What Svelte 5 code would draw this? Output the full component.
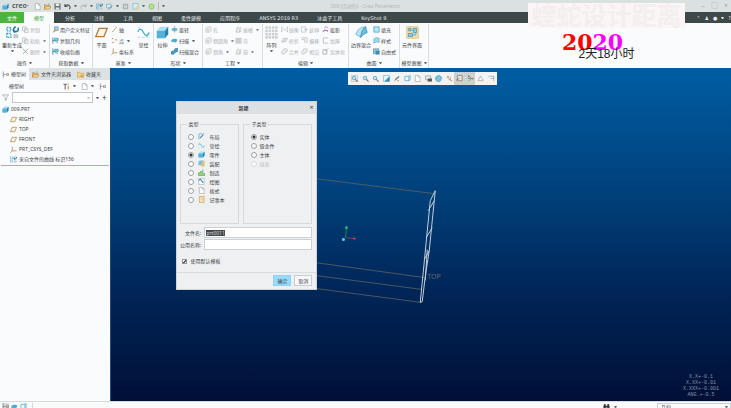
<script>
    import { onMount } from "svelte";

    let fileName = $state("prt0011");
    let commonName = $state("");
    let filter = $state("");
    let kind = $state("零件");
    let subKind = $state("实体");
    let useTemplate = $state(true);
    let nameInput;

    const tabs = ["分析", "注释", "工具", "视图", "柔性建模", "应用程序", "ANSYS 2019 R3", "冰盒子工具", "KeyShot 9"];

    const quick = [
        { icon: "file" },
        { icon: "folder" },
        { icon: "save" },
        { icon: "undo", menu: true },
        { icon: "redo", menu: true },
        { icon: "regen" },
        { icon: "window", menu: true },
        { icon: "stop" },
        { icon: "layers", menu: true },
        { icon: "ball" },
    ];

    // each part is either one large button or a column of small ones
    const groups = [
        {
            label: "操作",
            parts: [
                { big: "重新生成", icon: "regen", menu: true },
                [
                    { text: "复制", icon: "copy", off: true },
                    { text: "粘贴", icon: "copy", off: true, menu: true },
                    { text: "删除", icon: "cross", off: true, menu: true },
                ],
            ],
        },
        {
            label: "获取数据",
            parts: [
                [
                    { text: "用户定义特征", icon: "feature" },
                    { text: "复制几何", icon: "geom" },
                    { text: "收缩包络", icon: "geom" },
                ],
            ],
        },
        {
            label: "基准",
            parts: [
                { big: "平面", icon: "plane" },
                [
                    { text: "轴", icon: "axis" },
                    { text: "点", icon: "points", menu: true },
                    { text: "坐标系", icon: "csys" },
                ],
                { big: "草绘", icon: "sketch" },
            ],
        },
        {
            label: "形状",
            parts: [
                { big: "拉伸", icon: "cube" },
                [
                    { text: "旋转", icon: "revolve" },
                    { text: "扫描", icon: "sweep", menu: true },
                    { text: "扫描混合", icon: "blend" },
                ],
            ],
        },
        {
            label: "工程",
            parts: [
                [
                    { text: "孔", icon: "hole", off: true },
                    { text: "倒圆角", icon: "hole", off: true, menu: true },
                    { text: "倒角", icon: "hole", off: true, menu: true },
                ],
                [
                    { text: "拔模", icon: "draft", off: true, menu: true },
                    { text: "壳", icon: "shell", off: true },
                    { text: "筋", icon: "draft", off: true, menu: true },
                ],
            ],
        },
        {
            label: "编辑",
            parts: [
                { big: "阵列", icon: "pattern", menu: true },
                [
                    { text: "镜像", icon: "mirror", off: true },
                    { text: "修剪", icon: "trim", off: true },
                    { text: "合并", icon: "merge", off: true },
                ],
                [
                    { text: "延伸", icon: "extend", off: true },
                    { text: "偏移", icon: "offset", off: true },
                    { text: "相交", icon: "merge", off: true },
                ],
                [
                    { text: "投影", icon: "project" },
                    { text: "加厚", icon: "thick", off: true },
                    { text: "实体化", icon: "solid", off: true },
                ],
            ],
        },
        {
            label: "曲面",
            parts: [
                { big: "边界混合", icon: "surface" },
                [
                    { text: "填充", icon: "fill" },
                    { text: "样式", icon: "style" },
                    { text: "自由式", icon: "free" },
                ],
            ],
        },
        {
            label: "模型意图",
            parts: [{ big: "元件界面", icon: "component" }],
        },
    ];

    const tree = [
        { text: "RIGHT", icon: "plane" },
        { text: "TOP", icon: "plane" },
        { text: "FRONT", icon: "plane" },
        { text: "PRT_CSYS_DEF", icon: "csys" },
        { text: "来自文件的曲线 标识156", icon: "regen" },
    ];

    const viewTools = ["zoomfit", "zoom", "zoom", "repaint", "pen", "box", "file", "camera", "ball3d", "axes", "note", "spin", "cone", "flag"];

    const kinds = [
        { name: "布局", icon: "layout" },
        { name: "草绘", icon: "sketch" },
        { name: "零件", icon: "cube" },
        { name: "装配", icon: "assembly" },
        { name: "制造", icon: "mfg" },
        { name: "绘图", icon: "drawing" },
        { name: "格式", icon: "file" },
        { name: "记事本", icon: "notebook" },
    ];

    const subKinds = [
        { name: "实体" },
        { name: "钣金件" },
        { name: "主体" },
        { name: "线束", off: true },
    ];

    onMount(() => {
        nameInput.focus();
        nameInput.select();
    });
</script>

{#snippet icon(name)}
    <svg class="icon" viewBox="0 0 16 16" fill="none" stroke-width="1.6" aria-hidden="true">
        {#if name === "file"}
            <path d="M3 1h7l4 4v10H3z" fill="#fff" stroke="#a4a9aa" />
            <path d="M10 1v4h4" stroke="#a4a9aa" />
        {:else if name === "folder"}
            <path d="M1 14V4h5l2 2h5v3" fill="#e8bd75" stroke="#b98c48" />
            <path d="M1 14l3-6h12l-3 6z" fill="#f7d898" stroke="#b98c48" />
            <path d="M9 3q3-3 5 1" stroke="#59a9c8" />
        {:else if name === "save"}
            <path d="M1 1h14v14H1z" fill="#6c7274" />
            <path d="M4 1h8v6H4zM4 10h8v5H4z" fill="#e9eced" />
        {:else if name === "undo"}
            <path d="M2 2v6h6M2 8q5-6 10-2q4 4 0 8" stroke="#4d5456" stroke-width="2.4" />
        {:else if name === "redo"}
            <path d="M14 2v6H8M14 8q-5-6-10-2q-4 4 0 8" stroke="#a9afb0" stroke-width="2" />
        {:else if name === "regen"}
            <path d="M1 2h5v4H1zM1 9h5v5H1z" stroke="#39a2c7" stroke-dasharray="2 1" />
            <path d="M9 10h6v5H9z" fill="#c3c8ca" />
            <path d="M12 1q-4 2-2 6M11 7q5 0 4-5" stroke="#2879a2" stroke-width="2" />
            <path d="M8 5l2 4 3-3z" fill="#2879a2" />
        {:else if name === "window"}
            <path d="M1 3h11v8H1z" fill="#d7edf5" stroke="#72a9bd" />
            <path d="M5 15l9-9" stroke="#5a8292" stroke-width="2" />
        {:else if name === "stop"}
            <path d="M3 3h10v10H3z" stroke="#899092" />
            <path d="M5 6h6M5 10h6" stroke="#b2b7b8" />
        {:else if name === "layers"}
            <path d="M2 1h12v13H2z" fill="#d5eff8" stroke="#79b4c9" />
            <path d="M8 8h7v7H8z" fill="#f1d386" />
        {:else if name === "ball"}
            <circle cx="8" cy="8" r="6" fill="#b8df8e" stroke="#88ba61" />
        {:else if name === "copy"}
            <path d="M1 2h8v9H1zM6 6h8v9H6z" fill="#f4f5f5" stroke="#b4b8ba" />
        {:else if name === "cross"}
            <path d="M2 2l12 12M14 2L2 14" stroke="#8e9496" />
        {:else if name === "feature"}
            <path d="M6 2h8v8H6z" fill="#a8d8ec" stroke="#4596b8" />
            <path d="M1 14l7-8 3 3-7 6z" fill="#e59a45" />
        {:else if name === "geom"}
            <path d="M2 1v14M2 8h5" stroke="#2d86ae" stroke-width="2" />
            <path d="M6 3h8v6H6zM7 9l7 5" fill="#8acbe4" stroke="#3c93b9" />
        {:else if name === "plane"}
            <path d="M5 3h10l-4 10H1z" fill="#faf4e6" stroke="#ae7f3e" />
        {:else if name === "axis"}
            <path d="M3 14L13 2" stroke="#957148" stroke-dasharray="5 1" />
        {:else if name === "points"}
            <path d="M2 2l3 3M5 2L2 5M10 5l3 3M13 5l-3 3M3 11l3 3M6 11l-3 3" stroke="#ac8045" />
        {:else if name === "csys"}
            <path d="M5 1v10h10M5 11l-4 4" stroke="#a8773c" />
        {:else if name === "sketch"}
            <path d="M1 7q3-7 7 1t7 0" stroke="#42a9cc" />
            <path d="M1 14h3M6 14h3M11 14h3M1 2h2" stroke="#a6cfdc" stroke-width="1" />
        {:else if name === "cube"}
            <path d="M1 6l4-5h10v9l-4 5H1z" fill="#a9dff2" />
            <path d="M1 6h10v9H1z" fill="#55b2d5" />
            <path d="M11 6l4-5v9l-4 5z" fill="#2a82ae" />
        {:else if name === "revolve"}
            <ellipse cx="8" cy="8" rx="7" ry="4" fill="#6dbad7" />
            <path d="M8 1v14" stroke="#8a8f91" />
        {:else if name === "sweep"}
            <path d="M1 7q6-6 14-1l-4 7q-4-4-10-1z" fill="#4ca7cd" />
        {:else if name === "blend"}
            <path d="M1 14V8l5-1 4-6h5v7l-6 2-3 4z" fill="#4a9fc5" stroke="#2c7299" />
        {:else if name === "hole"}
            <path d="M2 14V5l4-3h8v9l-4 3z" fill="#eef0f0" stroke="#bec2c3" />
            <circle cx="7" cy="9" r="2" stroke="#bec2c3" />
        {:else if name === "draft"}
            <path d="M2 14L5 3h4l2 11zM13 2v12" fill="#eceeee" stroke="#b8bcbe" />
        {:else if name === "shell"}
            <path d="M2 3h12v11H2zM5 6h6v5H5z" fill="#dfe1e2" stroke="#b8bcbe" />
        {:else if name === "pattern"}
            {#each [1, 5, 9, 13] as x}
                {#each [1, 5, 9, 13] as y}
                    <rect {x} {y} width="2" height="2" fill="#b2b6b8" stroke="#cfd2d3" stroke-width="1" />
                {/each}
            {/each}
        {:else if name === "mirror"}
            <path d="M1 2l6 6-6 6zM15 2L9 8l6 6z" stroke="#bcc0c2" />
        {:else if name === "trim"}
            <path d="M1 10l5-7h9l-4 7zM4 14l8-12" fill="#eceeee" stroke="#b9bdbf" />
        {:else if name === "merge"}
            <path d="M1 10q0-4 5-4V2h8v7h-4q0 5-5 5-4 0-4-4z" fill="#f0f1f1" stroke="#b9bdbf" />
        {:else if name === "extend"}
            <path d="M1 2h9v12H1zM7 8h8M12 5l3 3-3 3" stroke="#b9bdbf" />
        {:else if name === "offset"}
            <path d="M1 2h13M1 6h8v8M14 2v12" stroke="#b0b4b6" />
        {:else if name === "project"}
            <path d="M2 13q4-6 12-1" stroke="#8a63a8" stroke-width="2.4" />
            <path d="M8 1l6 4M5 6l4-5" stroke="#b57ab5" />
        {:else if name === "thick"}
            <path d="M14 2H3v12h11" stroke="#b9bdbf" stroke-width="2" />
        {:else if name === "solid"}
            <path d="M2 4h9v10H2zM7 8l7-7" stroke="#979c9e" />
        {:else if name === "surface"}
            <path d="M1 10Q4 1 13 1q-5 4-6 13z" fill="#bce5f4" stroke="#6ab0cb" stroke-width="1" />
            <path d="M7 14Q8 4 13 1l2 7q-4 1-8 6z" fill="#6dbddb" stroke="#3b95b8" stroke-width="1" />
        {:else if name === "fill"}
            <path d="M2 2h12v12H2z" fill="#bce8f6" stroke="#2f9abf" />
        {:else if name === "style"}
            <path d="M2 14V5q5-6 12-2v9q-6-3-12 2z" fill="#a6dbef" stroke="#56a5c2" />
        {:else if name === "free"}
            <path d="M1 2h12v11H1z" fill="#92d1e8" stroke="#5d7f8c" />
            <path d="M5 6h10v9H7z" fill="#3c8caf" />
        {:else if name === "component"}
            <path d="M1 1h14v14H1z" fill="#f8deb0" stroke="#e0b775" stroke-width="1" />
            <path d="M3 9h5v4H3zM9 3h4v5H9zM3 3h3v3H3z" fill="#8ccbe1" stroke="#4b9cb9" stroke-width="1" />
            <path d="M6 5h3M8 11h4V8" stroke="#4b9cb9" stroke-width="1" />
        {:else if name === "tree"}
            <path d="M3 1v14M3 8h5M10 6h5v4h-5z" stroke="#767c7e" />
        {:else if name === "star"}
            <path d="M1 3h5l2 2h7v9H1z" fill="#f2d38c" stroke="#cda557" />
            <path d="M11 7l1 3h3l-2 2 1 3-3-2-3 2 1-3-2-2h3z" fill="#e59028" />
        {:else if name === "tools"}
            <path d="M1 3h8M5 3v12" stroke="#63696b" stroke-width="2.4" />
            <path d="M12 6v9M12 1v3" stroke="#cf8b36" stroke-width="2.4" />
        {:else if name === "funnel"}
            <path d="M1 2h14L10 8v6H7V8z" stroke="#9aa0a2" />
        {:else if name === "zoom" || name === "zoomfit"}
            {#if name === "zoomfit"}
                <path d="M1 1h14v14H1z" stroke="#b6bcc0" />
            {/if}
            <circle cx="7" cy="7" r="4" fill="#c3e5f1" stroke="#4694b4" />
            <path d="M10 10l5 5" stroke="#6b7478" stroke-width="2.4" />
        {:else if name === "repaint"}
            <path d="M1 1h14v14H1z" fill="#e4f4fa" stroke="#84b3c4" />
            <path d="M15 3v12H3z" fill="#2f8db5" />
        {:else if name === "pen"}
            <path d="M2 14l4-6 7-6 2 2-7 6z" fill="#6f7678" />
            <path d="M9 13h5" stroke="#868c8e" />
        {:else if name === "box"}
            <path d="M2 3h9v10H2zM11 3l3-2v10l-3 2" fill="#eef9fd" stroke="#49a0c1" />
        {:else if name === "camera"}
            <path d="M1 2h12v9H1z" fill="#e8ebec" stroke="#94999b" />
            <path d="M6 8h10v7H6z" fill="#555b5e" />
        {:else if name === "ball3d"}
            <path d="M1 6q7-9 14-1l-2 8q-8 5-11-2z" fill="#7fc5df" stroke="#4393b2" />
        {:else if name === "axes"}
            <path d="M2 2l5 5M7 2L2 7M5 9l10 5M10 4v8" stroke="#b48849" />
        {:else if name === "note"}
            <path d="M3 1h11v12H3z" fill="#efe6c7" stroke="#73797b" />
            <path d="M1 12l7-5" stroke="#555b5e" />
        {:else if name === "spin"}
            <path d="M2 8h12M4 2l6 6-6 6" stroke="#3a9c68" />
            <circle cx="13" cy="8" r="2" fill="#d26454" />
            <circle cx="4" cy="3" r="2" fill="#cf5146" />
        {:else if name === "cone"}
            <path d="M8 2l6 11H2z" stroke="#9fa5a8" />
        {:else if name === "flag"}
            <path d="M1 3h12v5H6M13 3v11" stroke="#9fa5a8" />
        {:else if name === "layout"}
            <path d="M2 14V2h12" stroke="#3591b7" stroke-dasharray="4 1" />
            <path d="M4 12l8-8" stroke="#2a779b" stroke-width="2.4" />
        {:else if name === "assembly"}
            <path d="M1 4l3-3h7v8l-3 3H1z" fill="#79c0da" />
            <path d="M7 8h8v7H7zM12 1h3v7h-3z" fill="#e8bd69" />
        {:else if name === "mfg"}
            <path d="M1 15V9h4V6h5v4h5v5z" fill="#9cd28d" stroke="#5da54f" />
            <path d="M11 1v5" stroke="#5d9ab0" stroke-width="2" />
        {:else if name === "drawing"}
            <path d="M2 1h12v14H2z" fill="#fff" stroke="#abb1b3" />
            <path d="M1 5l5-2 6 8" stroke="#3191b7" stroke-width="2.4" />
        {:else if name === "notebook"}
            <path d="M3 1h11v14H3z" fill="#f8e8c4" stroke="#c99c58" />
            <path d="M6 5h6M6 9h6" stroke="#d8b47c" />
        {:else if name === "find"}
            <path d="M1 7l2-5h3v12H1zM15 7l-2-5h-3v12h5zM6 6h4v4H6z" fill="#35393b" />
        {/if}
    </svg>
{/snippet}

<div class="app">
    <header class="titlebar">
        <div class="left">
            <span class="logo">{@render icon("cube")}creo<sup>•</sup></span>
            <div class="quick">
                {#each quick as q}
                    <button aria-label={q.icon}>
                        {@render icon(q.icon)}
                        {#if q.menu}<i class="arrow"></i>{/if}
                    </button>
                {/each}
                <button class="more" aria-label="自定义"><i class="arrow"></i></button>
            </div>
        </div>
        <h1>009 (活动的) - Creo Parametric</h1>
        <div class="window-buttons">
            <button aria-label="最小化">–</button>
            <button aria-label="最大化">□</button>
            <button aria-label="关闭">×</button>
        </div>
    </header>

    <nav class="tabs">
        <button class="file-tab">文件</button>
        <button class="active">模型</button>
        <div class="rest">
            {#each tabs as tab}
                <button>{tab}</button>
            {/each}
        </div>
        <div class="help">
            <button aria-label="折叠">⌃</button>
            <button aria-label="搜索">♟</button>
            <button aria-label="选项">●</button>
            <i class="arrow"></i>
            <button aria-label="帮助">?</button>
        </div>
    </nav>

    <section class="ribbon">
        {#each groups as group}
            <div class="group">
                <div class="parts">
                    {#each group.parts as part}
                        {#if part.big}
                            <button class="big">
                                {@render icon(part.icon)}
                                <span>{part.big}</span>
                                {#if part.menu}<i class="arrow"></i>{/if}
                            </button>
                        {:else}
                            <div class="column">
                                {#each part as item}
                                    <button class="small" disabled={item.off}>
                                        {@render icon(item.icon)}
                                        <span>{item.text}</span>
                                        {#if item.menu}<i class="arrow"></i>{/if}
                                    </button>
                                {/each}
                            </div>
                        {/if}
                    {/each}
                </div>
                <button class="group-label">{group.label}<i class="arrow"></i></button>
            </div>
        {/each}
    </section>

    <main>
        <aside>
            <div class="side-tabs">
                <button class="active">{@render icon("tree")}模型树</button>
                <button>{@render icon("folder")}文件夹浏览器</button>
                <button>{@render icon("star")}收藏夹</button>
            </div>
            <div class="side-head">
                <h2>模型树</h2>
                <button aria-label="设置">{@render icon("tools")}<i class="arrow"></i></button>
                <button aria-label="显示">{@render icon("file")}<i class="arrow"></i></button>
                <button aria-label="层">{@render icon("tree")}</button>
            </div>
            <div class="filter">
                {@render icon("funnel")}
                <div class="filter-box">
                    <input type="text" aria-label="过滤" bind:value={filter} />
                    <button aria-label="清除" onclick={() => (filter = "")}>×</button>
                </div>
                <i class="arrow"></i>
                <button aria-label="添加">+</button>
            </div>
            <ul>
                <li class="root">{@render icon("cube")}009.PRT</li>
                {#each tree as node}
                    <li>{@render icon(node.icon)}{node.text}</li>
                {/each}
            </ul>
        </aside>

        <section class="canvas">
            <svg class="scene" viewBox="110 68 621 333" preserveAspectRatio="xMinYMin meet">
                <g stroke="#5f6260" stroke-width="0.8">
                    <path d="M300 177L434 194M300 261L424 278M300 274L422 290M300 287L421 303" />
                </g>
                <g stroke="#c4ced8" stroke-width="1" fill="none">
                    <path d="M435 191L430 201L420 303L422 302L425 277L429 251L435 191" />
                    <path d="M434 201L428 211M432 228L426 238M429 251L424 260M427 250L425 281" />
                </g>
                <path d="M345 238L346 229" stroke="#249551" stroke-width="0.8" />
                <path d="M345 238L354 239" stroke="#954255" stroke-width="0.8" />
                <circle cx="346" cy="228" r="1.4" fill="#2fc65a" />
                <circle cx="354" cy="239" r="1.2" fill="#b74a55" />
                <circle cx="343" cy="240" r="1.5" fill="#45d3e2" />
                <text x="427" y="279" class="datum">TOP</text>
            </svg>

            <div class="view-tools">
                {#each viewTools as tool, i}
                    <button class:pressed={i === 10 || i === 11} aria-label={tool}>{@render icon(tool)}</button>
                {/each}
            </div>

            <pre class="tolerance">X.X+-0.1
X.XX+-0.01
X.XXX+-0.001
ANG.+-0.5</pre>

            <form class="dialog" onsubmit={(e) => e.preventDefault()}>
                <div class="dialog-title">
                    <h2>新建</h2>
                    <button type="button" aria-label="关闭">×</button>
                </div>
                <div class="choices">
                    <fieldset>
                        <legend>类型</legend>
                        {#each kinds as k}
                            <label>
                                <input type="radio" name="kind" value={k.name} bind:group={kind} />
                                {@render icon(k.icon)}
                                {k.name}
                            </label>
                        {/each}
                    </fieldset>
                    <fieldset class="sub">
                        <legend>子类型</legend>
                        {#each subKinds as k}
                            <label class:off={k.off}>
                                <input type="radio" name="sub" value={k.name} disabled={k.off} bind:group={subKind} />
                                {k.name}
                            </label>
                        {/each}
                    </fieldset>
                </div>
                <div class="fields">
                    <label for="file-name">文件名:</label>
                    <input id="file-name" type="text" bind:value={fileName} bind:this={nameInput} />
                    <label for="common-name">公用名称:</label>
                    <input id="common-name" type="text" bind:value={commonName} />
                </div>
                <label class="template">
                    <input type="checkbox" bind:checked={useTemplate} />
                    使用默认模板
                </label>
                <div class="dialog-buttons">
                    <button class="ok">确定</button>
                    <button type="button">取消</button>
                </div>
            </form>
        </section>
    </main>

    <footer>
        <button class="pressed" aria-label="模型树">{@render icon("tree")}</button>
        <button aria-label="浏览器">{@render icon("sweep")}</button>
        <button aria-label="全屏">{@render icon("box")}</button>
        <span class="divider"></span>
        <button class="find" aria-label="查找">{@render icon("find")}<i class="arrow"></i></button>
        <select aria-label="选择过滤器">
            <option>几何</option>
        </select>
        <i class="arrow"></i>
    </footer>

    <div class="overlay">
        <p class="banner">蝰蛇设计距离</p>
        <p class="year">20<span>20</span></p>
        <p class="countdown">2天18小时</p>
    </div>
</div>

<style>
    :global(body) {
        background: #fafcfd;
    }

    .app {
        position: relative;
        display: flex;
        flex-direction: column;
        height: 100vh;
        overflow: hidden;
        font-family: "Noto Sans", "Noto Sans CJK SC", sans-serif;
        font-size: 5px;
        line-height: 6px;
        color: #3c4244;
    }

    h1,
    h2,
    p,
    pre,
    ul {
        margin: 0;
        padding: 0;
        font-size: 5px;
        font-weight: normal;
    }

    button,
    input,
    select {
        font: inherit;
        color: inherit;
        margin: 0;
        padding: 0;
        border: 0;
        background: none;
        box-sizing: border-box;
    }

    button {
        display: flex;
        align-items: center;
        white-space: nowrap;
    }

    .icon {
        width: 7px;
        height: 7px;
        flex: none;
    }

    .arrow {
        flex: none;
        border: 1px solid transparent;
        border-top: 2px solid #666c6e;
        border-bottom: 0;
        width: 1px;
    }

    .titlebar {
        flex: 0 0 12px;
        display: grid;
        grid-template-columns: 1fr auto 1fr;
        align-items: center;
        background: #dae1e0;
    }

    .left {
        display: flex;
        align-items: center;
    }

    .logo {
        display: flex;
        align-items: center;
        gap: 3px;
        width: 34px;
        padding-left: 2px;
        box-sizing: border-box;
        font-size: 7px;
        font-weight: 600;
        color: #4c5254;
    }

    .logo sup {
        font-size: 4px;
        margin-left: -3px;
    }

    .quick {
        display: flex;
        align-items: center;
        gap: 3px;
    }

    .quick button {
        gap: 3px;
    }

    .quick .more {
        border-left: 1px solid #b4bab9;
        padding-left: 3px;
        height: 8px;
    }

    .titlebar h1 {
        color: #b0b8b7;
    }

    .window-buttons {
        display: flex;
        justify-content: flex-end;
        gap: 6px;
        padding-right: 3px;
        font-size: 7px;
        color: #a0a7a6;
    }

    .tabs {
        flex: 0 0 11px;
        display: flex;
        background: #3d484b;
        color: #e5e9ea;
        font-family: "DejaVu Sans", "Noto Sans CJK SC", sans-serif;
    }

    .tabs > button {
        justify-content: center;
        padding: 0 10px;
    }

    .tabs .file-tab {
        background: #4db53f;
        padding: 0 7px;
        color: #fff;
    }

    .tabs .active {
        background: #f8fbfc;
        color: #459b39;
    }

    .rest {
        display: flex;
        gap: 19px;
        padding-left: 11px;
    }

    .help {
        display: flex;
        align-items: center;
        gap: 4px;
        margin-left: auto;
    }

    .help .arrow {
        border-top-color: #e5e9ea;
    }

    .ribbon {
        flex: 0 0 45px;
        display: grid;
        grid-template-columns: 50px 43px 61px 49px 60px 86px 51px 29px;
        background: #f9fbfd;
    }

    .group {
        display: flex;
        flex-direction: column;
        min-width: 0;
        border-right: 1px solid #d9dee0;
        margin-top: 1px;
    }

    .parts {
        flex: 1;
        display: flex;
        justify-content: space-between;
        padding: 0 3px 0 2px;
    }

    .column {
        display: flex;
        flex-direction: column;
    }

    .small {
        height: 11px;
        gap: 1px;
    }

    .small .arrow {
        margin-left: 2px;
    }

    .small:disabled {
        color: #adb2b4;
    }

    .small:disabled .arrow {
        border-top-color: #8e9496;
    }

    .big {
        flex-direction: column;
        padding-top: 2px;
    }

    .big .icon {
        width: 13px;
        height: 13px;
        margin-bottom: 3px;
    }

    .big .arrow {
        margin-top: 2px;
    }

    .group-label {
        height: 11px;
        justify-content: center;
        gap: 2px;
    }

    main {
        flex: 1;
        display: flex;
        min-height: 0;
    }

    aside {
        flex: 0 0 110px;
        background: #f9fbfd;
    }

    .side-tabs {
        display: flex;
        height: 12px;
        background: #dce1e3;
    }

    .side-tabs button {
        gap: 2px;
        padding: 0 3px;
    }

    .side-tabs .active {
        background: #f9fbfd;
        padding: 0 3px 0 2px;
    }

    .side-head {
        display: flex;
        align-items: center;
        gap: 5px;
        height: 12px;
        padding: 0 4px 0 9px;
    }

    .side-head h2 {
        flex: 1;
    }

    .side-head button {
        gap: 3px;
    }

    .filter {
        display: flex;
        align-items: center;
        gap: 3px;
        padding: 0 4px 0 2px;
    }

    .filter-box {
        flex: 1;
        display: flex;
        height: 11px;
        box-sizing: border-box;
        border: 1px solid #c0c6c9;
        background: #fff;
    }

    .filter-box input {
        flex: 1;
        min-width: 0;
    }

    .filter-box button {
        padding-right: 2px;
        color: #8b9193;
    }

    .filter > button {
        font-size: 8px;
    }

    ul {
        list-style: none;
        margin: 1px 1px 0;
        padding-bottom: 1px;
        border-bottom: 1px solid #7ed36c;
    }

    li {
        display: flex;
        align-items: center;
        gap: 2px;
        height: 10px;
        padding-left: 9px;
        white-space: nowrap;
    }

    .root {
        padding-left: 1px;
    }

    .canvas {
        position: relative;
        flex: 1;
        min-width: 0;
        border-left: 1px solid #1d4c7c;
        background: linear-gradient(#005da3, #00407a 38%, #00275a 65%, #000f36);
    }

    .scene {
        display: block;
        width: 100%;
        height: 100%;
    }

    .datum {
        font-size: 7px;
        fill: #666b6c;
    }

    .view-tools {
        position: absolute;
        top: 4px;
        left: 237px;
        display: flex;
        width: 149px;
        height: 13px;
        padding: 0 1px;
        box-sizing: border-box;
        background: #f1f4f6;
    }

    .view-tools button {
        flex: 1;
        min-width: 0;
        justify-content: center;
    }

    .view-tools .pressed {
        background: #ccd1d3;
    }

    .tolerance {
        position: absolute;
        right: 12px;
        bottom: 3px;
        font-family: "Liberation Mono", monospace;
        text-align: center;
        color: #8693a8;
    }

    .dialog {
        position: absolute;
        top: 33px;
        left: 65px;
        width: 141px;
        box-sizing: border-box;
        background: #eef0f2;
        border: 1px solid #cdd4da;
    }

    .dialog-title {
        display: flex;
        align-items: center;
        height: 12px;
        background: #dce0e2;
    }

    .dialog-title h2 {
        flex: 1;
        text-align: center;
        font-weight: 600;
    }

    .dialog-title button {
        padding-right: 3px;
        font-size: 7px;
    }

    .choices {
        display: flex;
        gap: 4px;
        padding: 7px 4px 0 3px;
    }

    fieldset {
        flex: 5;
        box-sizing: border-box;
        height: 103px;
        min-width: 0;
        margin: 0;
        padding: 5px 0 0 7px;
        border: 1px solid #d6dadd;
    }

    fieldset.sub {
        flex: 6;
    }

    legend {
        padding: 0 1px;
        margin-left: -1px;
    }

    fieldset label {
        display: flex;
        align-items: center;
        gap: 4px;
        height: 9px;
    }

    .sub label {
        gap: 2px;
    }

    input[type="radio"] {
        appearance: none;
        width: 6px;
        height: 6px;
        border: 1px solid #999fa2;
        border-radius: 50%;
        background: #fff;
    }

    input[type="radio"]:checked {
        background: radial-gradient(circle, #2e3335 50%, #fff 60%);
    }

    .off {
        color: #bdc1c4;
    }

    .off input[type="radio"] {
        border-color: #d3d7da;
    }

    .fields {
        display: grid;
        grid-template-columns: 24px 1fr;
        gap: 1px 3px;
        align-items: center;
        padding: 3px 4px 0 0;
    }

    .fields label {
        text-align: right;
        white-space: nowrap;
    }

    .fields input {
        height: 11px;
        min-width: 0;
        padding-left: 1px;
        border: 1px solid #cbd0d4;
        background: #fff;
        outline: none;
    }

    .fields input::selection {
        background: #43484b;
        color: #d8dcde;
    }

    .template {
        display: flex;
        align-items: center;
        gap: 3px;
        height: 22px;
        padding-left: 5px;
    }

    input[type="checkbox"] {
        appearance: none;
        width: 5px;
        height: 5px;
        border: 1px solid #92989b;
        background: #fff;
    }

    input[type="checkbox"]:checked {
        background: linear-gradient(135deg, #fff 35%, #33383a 40% 65%, #fff 70%);
    }

    .dialog-buttons {
        display: flex;
        justify-content: flex-end;
        gap: 3px;
        padding: 2px 4px 3px;
        border-top: 1px solid #d9dde0;
    }

    .dialog-buttons button {
        justify-content: center;
        width: 18px;
        height: 11px;
        border: 1px solid #c8cdd0;
        background: #f7f8f9;
    }

    .dialog-buttons .ok {
        border-color: #8fd4f5;
        background: #96dbfb;
    }

    footer {
        flex: 0 0 7px;
        display: flex;
        align-items: flex-start;
        gap: 2px;
        box-sizing: border-box;
        padding: 1px 2px 0;
        border-top: 1px solid #d6dadc;
        background: #f9fbfb;
        overflow: hidden;
    }

    footer .pressed {
        background: #d5d9db;
    }

    footer .divider {
        width: 1px;
        height: 6px;
        margin-left: 3px;
        background: #d5d9db;
    }

    footer .find {
        gap: 4px;
        margin-left: auto;
        margin-right: 38px;
    }

    footer select {
        appearance: none;
        width: 74px;
        height: 7px;
        padding-left: 3px;
        border: 1px solid #cbd0d2;
        border-bottom: 0;
        line-height: 5px;
    }

    footer > .arrow {
        margin: 3px 1px 0 -8px;
    }

    .overlay {
        position: absolute;
        top: 3px;
        right: 46px;
        width: 157px;
        display: flex;
        flex-direction: column;
        align-items: center;
    }

    .banner {
        width: 100%;
        font-size: 25px;
        line-height: 25px;
        font-weight: 700;
        text-align: center;
        white-space: nowrap;
        color: #f3efee;
        background: #fbf6f5;
    }

    .year {
        font-family: "DejaVu Serif", serif;
        font-size: 22px;
        line-height: 28px;
        font-weight: bold;
        color: #f00;
        padding-right: 28px;
    }

    .year span {
        color: #f0f;
    }

    .countdown {
        font-family: "Liberation Sans", "Noto Sans CJK SC", sans-serif;
        font-size: 12px;
        line-height: 14px;
        margin-top: -9px;
        color: #222;
    }
</style>
